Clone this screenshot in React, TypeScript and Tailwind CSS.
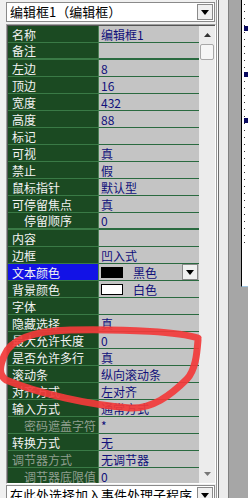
import React from "react";

type Row = {
  name: string;
  value?: string;
  indent?: boolean;
  disabled?: boolean;
  selected?: boolean;
  swatch?: "black" | "white";
  thick?: boolean;
};

const rows: Row[] = [
  { name: "名称", value: "编辑框1" },
  { name: "备注", thick: true },
  { name: "左边", value: "8" },
  { name: "顶边", value: "16" },
  { name: "宽度", value: "432" },
  { name: "高度", value: "88" },
  { name: "标记" },
  { name: "可视", value: "真" },
  { name: "禁止", value: "假" },
  { name: "鼠标指针", value: "默认型" },
  { name: "可停留焦点", value: "真" },
  { name: "停留顺序", value: "0", indent: true, thick: true },
  { name: "内容" },
  { name: "边框", value: "凹入式" },
  { name: "文本颜色", value: "黑色", selected: true, swatch: "black" },
  { name: "背景颜色", value: "白色", swatch: "white" },
  { name: "字体" },
  { name: "隐藏选择", value: "真" },
  { name: "最大允许长度", value: "0" },
  { name: "是否允许多行", value: "真" },
  { name: "滚动条", value: "纵向滚动条" },
  { name: "对齐方式", value: "左对齐" },
  { name: "输入方式", value: "通常方式" },
  { name: "密码遮盖字符", value: "*", indent: true, disabled: true },
  { name: "转换方式", value: "无" },
  { name: "调节器方式", value: "无调节器", disabled: true },
  { name: "调节器底限值", value: "0", indent: true, disabled: true },
];

const font = { fontFamily: '"Noto Sans CJK SC", "Noto Sans", sans-serif' };

const DropButton = () => (
  <div className="w-[16px] h-[16px] shrink-0 bg-[#f0f0f0] border border-[#8a8a8a] flex items-center justify-center">
    <svg width="8" height="5" viewBox="0 0 8 5">
      <path d="M0 0 H8 L4 5 Z" fill="#000" />
    </svg>
  </div>
);

const Combo = ({ text }: { text: string }) => (
  <div className="ml-[6px] w-[209px] h-[20px] shrink-0 bg-white border border-[#8a8a8a] flex items-center">
    <span className="flex-1 pl-[3px] text-[13px] leading-[18px] text-black whitespace-nowrap overflow-hidden" style={font}>
      {text}
    </span>
    <div className="mr-[1px]">
      <DropButton />
    </div>
  </div>
);

const PropRow = ({ row }: { row: Row }) => {
  const nameColor = row.disabled ? "text-[#8f9f8f]" : "text-[#f2f2f2]";
  const nameBg = row.selected ? "bg-[#1212e6]" : "bg-[#1b4a22]";
  const line = row.thick ? "border-b-2" : "border-b";
  return (
    <div className="flex h-[17px] shrink-0">
      <div
        className={`w-[91px] shrink-0 ${nameBg} border-r border-r-[#4b7f55] ${line} border-b-[#3a7a46] flex items-center ${row.indent ? "pl-[16px]" : "pl-[4px]"}`}
      >
        <span className={`text-[12px] leading-[15px] ${nameColor} whitespace-nowrap`} style={font}>
          {row.name}
        </span>
      </div>
      <div className={`flex-1 bg-[#c4c4c4] ${line} border-[#2a6a40] flex items-center pl-[2px]`}>
        {row.swatch && (
          <div
            className={`w-[22px] h-[11px] shrink-0 border border-black mr-[10px] ${row.swatch === "black" ? "bg-black" : "bg-white"}`}
          />
        )}
        {row.value && (
          <span className="text-[12px] leading-[15px] text-[#10107a] whitespace-nowrap flex-1" style={font}>
            {row.value}
          </span>
        )}
        {row.selected && (
          <div className="mr-[1px]">
            <DropButton />
          </div>
        )}
      </div>
    </div>
  );
};

const Scrollbar = () => (
  <div className="w-[16px] shrink-0 bg-[#ececec] flex flex-col items-center">
    <div className="h-[16px] flex items-center justify-center mt-[1px]">
      <svg width="7" height="4" viewBox="0 0 7 4">
        <path d="M0 4 L3.5 0 L7 4 Z" fill="#333" />
      </svg>
    </div>
    <div className="w-[14px] h-[16px] mt-[1px] bg-[#f6f6f6] border border-[#a8a8a8] rounded-[2px]" />
    <div className="flex-1" />
    <div className="h-[16px] flex items-center justify-center mb-[1px]">
      <svg width="7" height="4" viewBox="0 0 7 4">
        <path d="M0 0 H7 L3.5 4 Z" fill="#777" />
      </svg>
    </div>
  </div>
);

const Canvas = () => (
  <div className="flex-1 flex flex-col">
    <div className="h-[287px] bg-white border-l border-black border-b border-b-[#9fc4e0] relative flex flex-col items-start pl-[2px] pt-[4px] gap-[6px]">
      {Array.from({ length: 35 }).map((_, i) => (
        <div key={i} className="w-[1px] h-[1px] bg-[#303030] shrink-0" />
      ))}
      <div className="absolute left-[2px] top-[26px] w-[5px] h-[5px] bg-[#0a0a60]" />
      <div className="absolute left-[2px] top-[72px] w-[5px] h-[5px] bg-[#0a0a60]" />
      <div className="absolute left-[2px] top-[118px] w-[5px] h-[5px] bg-[#0a0a60]" />
    </div>
    <div className="flex-1 bg-[#a6a6a6]" />
  </div>
);

export default function App() {
  return (
    <div className="w-[248px] h-[498px] bg-[#f0f0f0] relative overflow-hidden flex" style={font}>
      {/* property panel */}
      <div className="w-[216px] shrink-0 flex flex-col">
        <div className="h-[2px] shrink-0" />
        <Combo text="编辑框1（编辑框）" />
        <div className="ml-[6px] mt-[2px] w-[210px] h-[460px] shrink-0 border border-[#a0a0a0] border-r-[#ffffff] border-b-[#ffffff]">
          <div className="w-full h-full border-l border-t border-[#555555] flex overflow-hidden">
            <div className="flex-1 flex flex-col overflow-hidden">
              {rows.map((r) => (
                <PropRow key={r.name} row={r} />
              ))}
            </div>
            <Scrollbar />
          </div>
        </div>
        <div className="h-[1px] shrink-0" />
        <Combo text="在此处选择加入事件处理子程序" />
      </div>

      {/* splitter + design area */}
      <div className="flex-1 flex">
        <div className="w-[1px] bg-[#9a9a9a]" />
        <div className="w-[1px] bg-white" />
        <div className="w-[1px] bg-[#6e6e6e]" />
        <div className="w-[9px] bg-[#ececec]" />
        <div className="w-[1px] bg-[#808080]" />
        <div className="w-[12px] bg-[#a6a6a6]" />
        <Canvas />
      </div>

      {/* red annotation circle */}
      <svg className="absolute left-0 top-0 pointer-events-none" width="248" height="498" viewBox="0 0 248 498">
        <path
          d="M198 338 C180 332 130 329 70 330 C30 331 10 340 4 356 C0 366 -2 374 6 380 C40 394 90 405 130 408 C152 409 170 396 187 379 C196 369 197 352 198 340"
          fill="none"
          stroke="#f23a3a"
          strokeWidth="7"
          strokeLinecap="round"
          strokeLinejoin="round"
          opacity="0.92"
        />
      </svg>
    </div>
  );
}
